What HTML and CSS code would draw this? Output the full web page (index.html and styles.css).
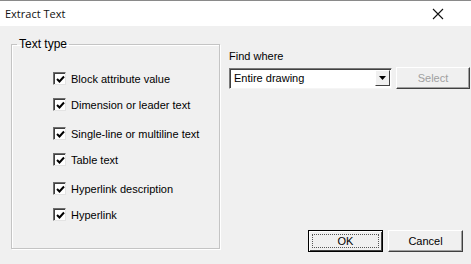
FILE: index.html
```html
<!DOCTYPE html>
<html lang="en">
<head>
    <meta charset="UTF-8">
    <title>Extract Text</title>
    <link rel="stylesheet" href="styles.css">
</head>
<body>
    <div class="titlebar">
        <span class="title">Extract Text</span>
        <svg class="close" width="12" height="12" viewBox="0 0 12 12">
            <path d="M1 1 L11 11 M11 1 L1 11" stroke="#111" stroke-width="1.1" fill="none"/>
        </svg>
    </div>
    <div class="content">
        <fieldset class="group">
            <legend>Text type</legend>
            <ul class="checks">
                <li><span class="box"><svg width="9" height="9" viewBox="0 0 9 9"><path d="M1 4 L3.5 6.5 L8 1.5" stroke="#000" stroke-width="2" fill="none"/></svg></span>Block attribute value</li>
                <li><span class="box"><svg width="9" height="9" viewBox="0 0 9 9"><path d="M1 4 L3.5 6.5 L8 1.5" stroke="#000" stroke-width="2" fill="none"/></svg></span>Dimension or leader text</li>
                <li class="wide"><span class="box"><svg width="9" height="9" viewBox="0 0 9 9"><path d="M1 4 L3.5 6.5 L8 1.5" stroke="#000" stroke-width="2" fill="none"/></svg></span>Single-line or multiline text</li>
                <li><span class="box"><svg width="9" height="9" viewBox="0 0 9 9"><path d="M1 4 L3.5 6.5 L8 1.5" stroke="#000" stroke-width="2" fill="none"/></svg></span>Table text</li>
                <li class="wide"><span class="box"><svg width="9" height="9" viewBox="0 0 9 9"><path d="M1 4 L3.5 6.5 L8 1.5" stroke="#000" stroke-width="2" fill="none"/></svg></span>Hyperlink description</li>
                <li><span class="box"><svg width="9" height="9" viewBox="0 0 9 9"><path d="M1 4 L3.5 6.5 L8 1.5" stroke="#000" stroke-width="2" fill="none"/></svg></span>Hyperlink</li>
            </ul>
        </fieldset>
        <div class="side">
            <div class="label">Find where</div>
            <div class="find-row">
                <div class="combo">
                    <span>Entire drawing</span>
                    <span class="arrow"><svg width="7" height="4" viewBox="0 0 7 4"><path d="M0 0 H7 L3.5 4 Z" fill="#000"/></svg></span>
                </div>
                <div class="btn disabled">Select</div>
            </div>
            <div class="actions">
                <div class="btn default"><span class="focus">OK</span></div>
                <div class="btn">Cancel</div>
            </div>
        </div>
    </div>
</body>
</html>
```

FILE: styles.css
```css
* {
    margin: 0;
    padding: 0;
    box-sizing: border-box;
}

body {
    width: 471px;
    height: 264px;
    background: #f0f0f0;
    font-family: 'Liberation Sans', Arial, sans-serif;
    font-size: 11px;
    color: #000;
    overflow: hidden;
}

.titlebar {
    height: 26px;
    background: #fff;
    border-top: 1px solid #8a8a8a;
    display: flex;
    align-items: center;
    justify-content: space-between;
    padding: 0 27px 0 5px;
}

.title {
    font-family: 'Open Sans', 'Noto Sans', sans-serif;
    font-size: 11px;
    color: #111;
}

.content {
    display: flex;
    height: 226px;
    padding: 11px 0 0 11px;
}

.group {
    width: 209px;
    height: 212px;
    border: 1px solid #c4c4c4;
    box-shadow: inset 1px 1px 0 #fff, 1px 1px 0 #fff;
    padding: 0;
}

.group legend {
    margin-left: 5px;
    padding: 0 2px;
    font-size: 12px;
    line-height: 14px;
}

.checks {
    list-style: none;
    display: flex;
    flex-direction: column;
    gap: 13px;
    padding: 21px 0 0 41px;
}

.checks li {
    display: flex;
    align-items: center;
    height: 13px;
    white-space: nowrap;
}

.checks li.wide {
    margin-top: 3px;
}

.box {
    width: 13px;
    height: 13px;
    margin-right: 5px;
    background: #fff;
    border: 1px solid;
    border-color: #6d6d6d #e3e3e3 #e3e3e3 #6d6d6d;
    box-shadow: inset 1px 1px 0 #404040;
    display: flex;
    align-items: center;
    justify-content: center;
    padding: 1px 0 0 1px;
}

.side {
    display: flex;
    flex-direction: column;
    margin-left: 9px;
    width: 241px;
}

.label {
    margin-top: 13px;
    line-height: 13px;
}

.find-row {
    display: flex;
    align-items: center;
    margin-top: 4px;
}

.combo {
    width: 163px;
    height: 21px;
    background: #fff;
    border: 1px solid;
    border-color: #7a7a7a #f5f5f5 #f5f5f5 #7a7a7a;
    box-shadow: inset 1px 1px 0 #404040;
    display: flex;
    align-items: center;
    justify-content: space-between;
    padding: 0 1px 0 4px;
}

.arrow {
    width: 15px;
    height: 16px;
    background: #f0f0f0;
    border: 1px solid;
    border-color: #fff #404040 #404040 #fff;
    display: flex;
    align-items: center;
    justify-content: center;
}

.btn {
    width: 75px;
    height: 22px;
    background: #f0f0f0;
    border: 1px solid;
    border-color: #fff #404040 #404040 #fff;
    box-shadow: inset -1px -1px 0 #a0a0a0;
    display: flex;
    align-items: center;
    justify-content: center;
}

.find-row .btn {
    width: 74px;
    margin-left: 4px;
}

.btn.disabled {
    color: #a0a0a0;
}

.actions {
    display: flex;
    gap: 5px;
    margin-top: auto;
    padding-left: 79px;
}

.btn.default {
    border: 1px solid #000;
    box-shadow: inset 1px 1px 0 #fff, inset -1px -1px 0 #404040;
    padding: 3px;
}

.focus {
    width: 100%;
    height: 100%;
    border: 1px dotted #555;
    display: flex;
    align-items: center;
    justify-content: center;
}
```
